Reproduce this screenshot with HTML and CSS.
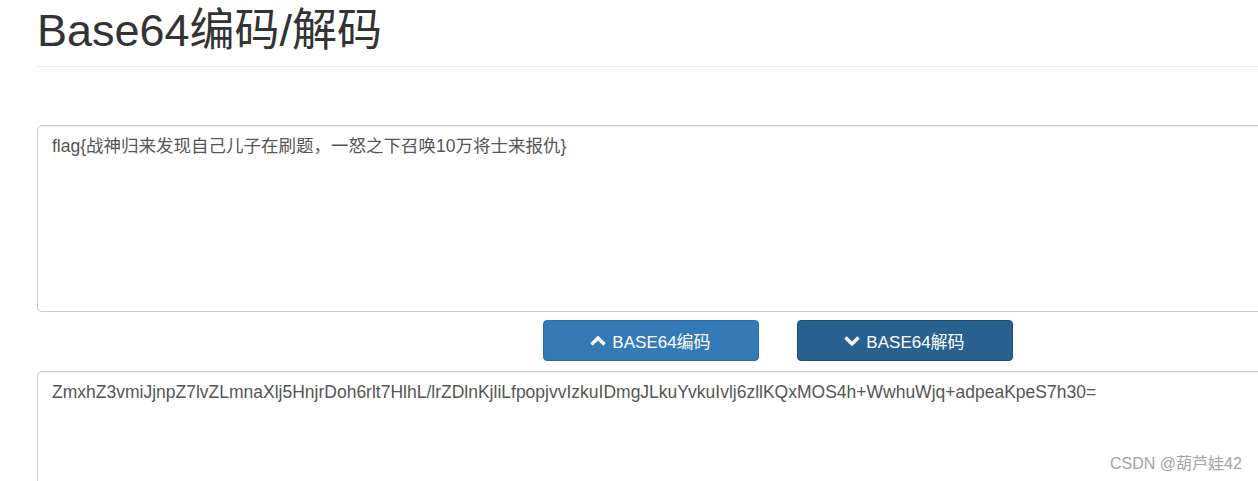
FILE: index.html
```html
<!DOCTYPE html>
<html lang="zh-CN">
<head>
    <meta charset="UTF-8">
    <title>Base64编码/解码</title>
    <link rel="stylesheet" href="styles.css">
</head>
<body>
    <div class="container">
        <div class="page-header">
            <h1>Base64编码/解码</h1>
        </div>

        <textarea class="form-control source" id="source">flag{战神归来发现自己儿子在刷题，一怒之下召唤10万将士来报仇}</textarea>

        <div class="btn-row">
            <button class="btn btn-primary" id="encode">
                <svg class="chevron" viewBox="0 0 16 10" width="16" height="10"><path d="M1.5 8.5 L8 2 L14.5 8.5" fill="none" stroke="#fff" stroke-width="3.4" stroke-linejoin="miter"/></svg>
                BASE64编码
            </button>
            <button class="btn btn-primary active" id="decode">
                <svg class="chevron" viewBox="0 0 16 10" width="16" height="10"><path d="M1.5 1.5 L8 8 L14.5 1.5" fill="none" stroke="#fff" stroke-width="3.4" stroke-linejoin="miter"/></svg>
                BASE64解码
            </button>
        </div>

        <textarea class="form-control result" id="result">ZmxhZ3vmiJjnpZ7lvZLmnaXlj5HnjrDoh6rlt7HlhL/lrZDlnKjliLfpopjvvIzkuIDmgJLkuYvkuIvlj6zllKQxMOS4h+WwhuWjq+adpeaKpeS7h30=</textarea>
    </div>

    <div class="watermark">CSDN @葫芦娃42</div>
</body>
</html>
```

FILE: styles.css
```css
body {
    margin: 0;
    padding: 0;
    background-color: #fff;
    color: #333;
    font-family: 'Liberation Sans', Arial, 'Noto Sans CJK SC', sans-serif;
    overflow: hidden;
    height: 481px;
}

.container {
    width: 1481px;
    margin-left: 37px;
}

.page-header {
    border-bottom: 1px solid #eee;
    padding-bottom: 6px;
    margin-bottom: 58px;
}

.page-header h1 {
    margin: 0;
    padding-top: 2px;
    font-size: 45px;
    font-weight: normal;
    line-height: 58px;
    color: #333;
}

.form-control {
    display: block;
    box-sizing: border-box;
    width: 100%;
    padding: 8px 14px;
    font-family: 'Liberation Sans', Arial, 'Noto Sans CJK SC', sans-serif;
    font-size: 17.5px;
    line-height: 24px;
    color: #555;
    background-color: #fff;
    border: 1px solid #ccc;
    border-radius: 5px;
    box-shadow: inset 0 1px 1px rgba(0,0,0,0.075);
    resize: none;
    outline: none;
    margin: 0;
}

.source {
    height: 187px;
}

.result {
    height: 140px;
}

.btn-row {
    display: flex;
    justify-content: center;
    gap: 38px;
    margin: 8px 0 10px;
}

.btn {
    display: flex;
    align-items: center;
    justify-content: center;
    gap: 6px;
    width: 216px;
    height: 41px;
    box-sizing: border-box;
    padding: 0;
    font-family: 'Liberation Sans', Arial, 'Noto Sans CJK SC', sans-serif;
    font-size: 17px;
    color: #fff;
    border-radius: 4px;
    cursor: pointer;
}

.btn-primary {
    background-color: #337ab7;
    border: 1px solid #2e6da4;
}

.btn-primary.active {
    background-color: #286090;
    border-color: #204d74;
}

.chevron {
    display: block;
}

.watermark {
    position: absolute;
    left: 1110px;
    top: 450px;
    font-family: 'Liberation Sans', Arial, 'Noto Sans CJK SC', sans-serif;
    font-size: 16px;
    color: #a3a3a3;
}
```
